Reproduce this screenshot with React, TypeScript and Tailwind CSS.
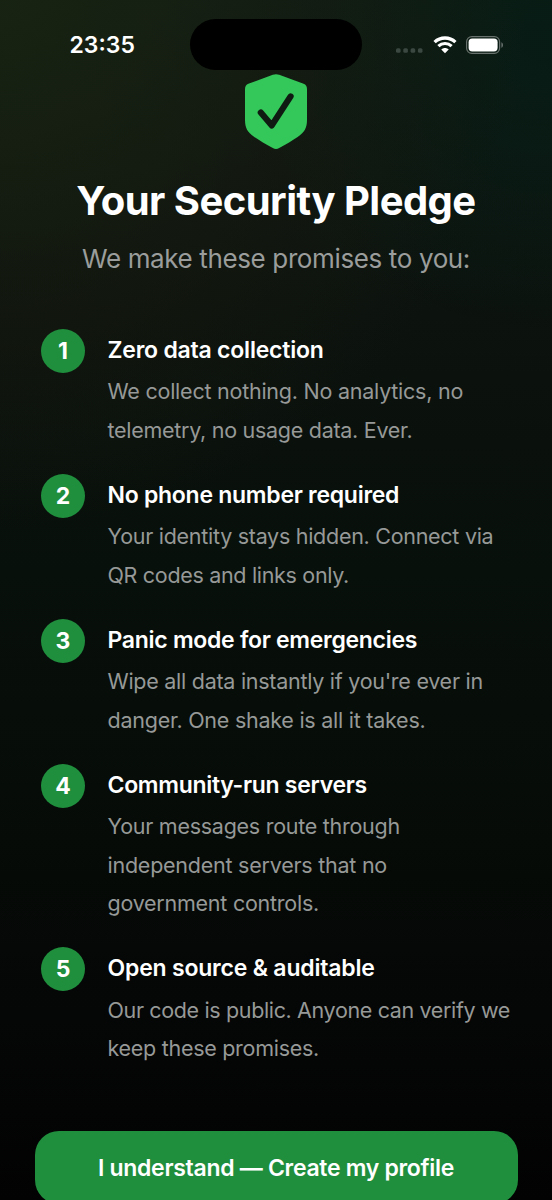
import React from 'react';

type Line = { text: string; tracking: string };
type Pledge = { title: string; titleTracking: string; lines: Line[] };

const pledges: Pledge[] = [
  {
    title: 'Zero data collection',
    titleTracking: 'tracking-[-0.22px]',
    lines: [
      { text: 'We collect nothing. No analytics, no', tracking: 'tracking-[-0.24px]' },
      { text: 'telemetry, no usage data. Ever.', tracking: 'tracking-[-0.28px]' },
    ],
  },
  {
    title: 'No phone number required',
    titleTracking: 'tracking-[-0.27px]',
    lines: [
      { text: 'Your identity stays hidden. Connect via', tracking: 'tracking-[-0.28px]' },
      { text: 'QR codes and links only.', tracking: 'tracking-[-0.32px]' },
    ],
  },
  {
    title: 'Panic mode for emergencies',
    titleTracking: 'tracking-[-0.29px]',
    lines: [
      { text: "Wipe all data instantly if you're ever in", tracking: 'tracking-[-0.27px]' },
      { text: 'danger. One shake is all it takes.', tracking: 'tracking-[-0.25px]' },
    ],
  },
  {
    title: 'Community-run servers',
    titleTracking: 'tracking-[-0.3px]',
    lines: [
      { text: 'Your messages route through', tracking: 'tracking-[-0.27px]' },
      { text: 'independent servers that no', tracking: 'tracking-[-0.24px]' },
      { text: 'government controls.', tracking: 'tracking-[-0.25px]' },
    ],
  },
  {
    title: 'Open source & auditable',
    titleTracking: 'tracking-[-0.2px]',
    lines: [
      { text: 'Our code is public. Anyone can verify we', tracking: 'tracking-[-0.36px]' },
      { text: 'keep these promises.', tracking: 'tracking-[-0.28px]' },
    ],
  },
];

function StatusBar() {
  return (
    <header className="flex h-[74px] shrink-0 items-start pt-[19px]">
      <div className="flex h-[51px] w-[190px] items-center pl-[69.5px]">
        <span className="text-[23px] leading-7 font-[570] tracking-[0px] text-white">23:35</span>
      </div>
      <div className="h-[50.5px] w-[172px] rounded-full bg-black" />
      <div className="flex h-[51px] items-center pl-[34px]">
        <svg className="mt-[12px] h-[5px] w-[27px]" viewBox="0 0 27 5" fill="#3b4741">
          <rect x="0" y="0.2" width="4.6" height="4.6" rx="1.5" />
          <rect x="7.3" y="0.2" width="4.6" height="4.6" rx="1.5" />
          <rect x="14.6" y="0.2" width="4.6" height="4.6" rx="1.5" />
          <rect x="21.9" y="0.2" width="4.6" height="4.6" rx="1.5" />
        </svg>
        <svg className="ml-[9.5px] h-[18px] w-[24px]" viewBox="0 0 24 18" fill="none">
          <path d="M1.6 6.1C7.4.6 16.6.6 22.4 6.1" stroke="white" strokeWidth="3.3" />
          <path d="M5.4 10.1C9.1 6.6 14.9 6.6 18.6 10.1" stroke="white" strokeWidth="3.2" />
          <path d="M8.3 13.4C10.4 11.4 13.6 11.4 15.7 13.4L12 17.2Z" fill="white" />
        </svg>
        <svg className="ml-[9.5px] h-[18px] w-[38px]" viewBox="0 0 38 18" fill="none">
          <rect x="0.6" y="0.6" width="33" height="16.8" rx="5.2" stroke="#68716d" strokeWidth="1.2" />
          <rect x="2.6" y="2.6" width="29" height="12.8" rx="3.6" fill="white" />
          <path d="M35.4 6.2C37.5 7 37.5 11 35.4 11.8Z" fill="#68716d" />
        </svg>
      </div>
    </header>
  );
}

function Shield() {
  return (
    <svg className="h-[75px] w-[62px] shrink-0" viewBox="0 0 62 75" fill="none">
      <path
        d="M27.8.8Q31-.4 34.2.8L58.6 9.8Q62 11.1 62 15V46C62 54 59.5 58.2 53 62.8C47.5 66.7 41 70.2 34.2 74.1Q31 75.8 27.8 74.1C21 70.2 14.5 66.7 9 62.8C2.5 58.2 0 54 0 46V15Q0 11.1 3.4 9.8Z"
        fill="#34c759"
      />
      <path d="M15.8 38.5L26.8 51.4L45.6 22.4" stroke="#0f1b12" strokeWidth="6.2" strokeLinecap="round" strokeLinejoin="round" />
    </svg>
  );
}

export default function App() {
  return (
    <div className="flex h-[1200px] w-[552px] flex-col overflow-hidden bg-[radial-gradient(circle_at_0%_0%,rgba(25,36,18,0.85),rgba(24,27,15,0.45)_24%,transparent_40%),radial-gradient(circle_at_100%_3%,rgba(5,28,21,0.8),transparent_24%),linear-gradient(180deg,#101d15_0%,#0e1611_14%,#0c120e_26%,#08100b_48%,#060b07_70%,#050606_85%,#020202_100%)] font-['Inter','Liberation_Sans',sans-serif]">
      <StatusBar />
      <main className="flex flex-col items-center">
        <Shield />
        <h1 className="mt-[27px] text-[40px] leading-[50px] font-bold tracking-[-0.53px] whitespace-nowrap text-white">Your Security Pledge</h1>
        <p className="mt-[16px] text-[26px] leading-[34px] tracking-[-0.37px] whitespace-nowrap text-[#9a9d9b]">We make these promises to you:</p>
        <ol className="mt-[53px] flex w-full flex-col gap-[24.9px] pl-[41px]">
          {pledges.map((p, i) => (
            <li key={p.title} className="flex gap-[22.5px]">
              <span className="flex size-[44px] shrink-0 items-center justify-center rounded-full bg-[#1f8e3d] pt-px text-[23px] leading-none font-bold text-white">
                {i + 1}
              </span>
              <div className="pt-[5px]">
                <h2 className={`text-[23px] leading-[32px] font-semibold whitespace-nowrap text-white ${p.titleTracking}`}>{p.title}</h2>
                <p className="mt-[6.3px] flex flex-col text-[21.5px] leading-[38.4px] text-[#969997]">
                  {p.lines.map((l) => (
                    <span key={l.text} className={`whitespace-nowrap ${l.tracking}`}>{l.text}</span>
                  ))}
                </p>
              </div>
            </li>
          ))}
        </ol>
        <button className="mt-[63.5px] flex h-[73px] w-[483px] shrink-0 items-center justify-center rounded-[24px] bg-[#1f8e3d] text-[23px] leading-7 font-semibold tracking-[-0.3px] whitespace-nowrap text-white">
          I understand — Create my profile
        </button>
      </main>
    </div>
  );
}
